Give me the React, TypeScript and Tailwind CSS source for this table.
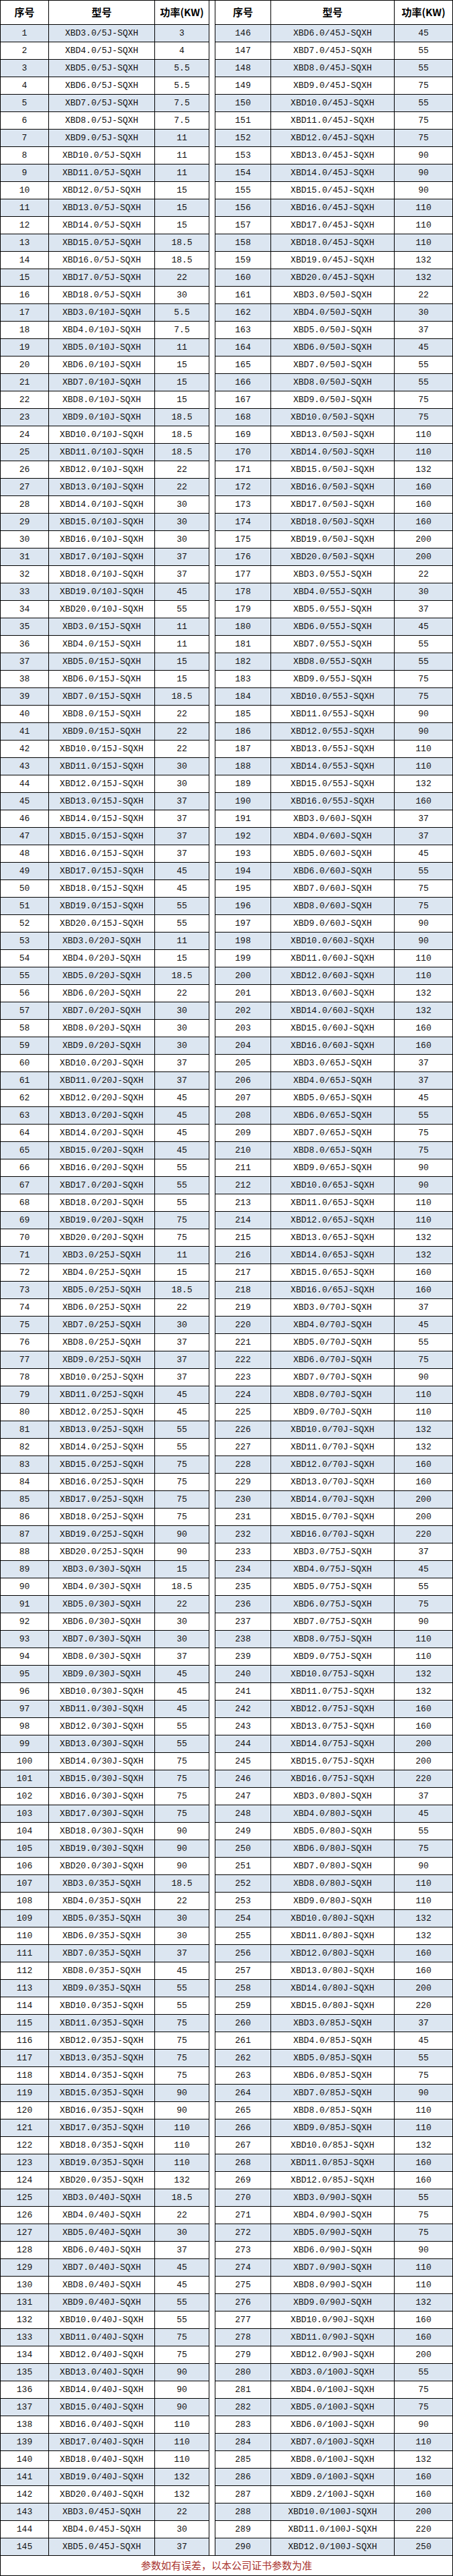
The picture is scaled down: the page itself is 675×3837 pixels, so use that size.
import React from 'react';

type Spec = [number, number[], number[]];

const range = (a: number, b: number) => Array.from({ length: b - a + 1 }, (_, i) => a + i);

// flow, heads, motor power
const SPECS: Spec[] = [
  [5, range(3, 18), [3, 4, 5.5, 5.5, 7.5, 7.5, 11, 11, 11, 15, 15, 15, 18.5, 18.5, 22, 30]],
  [10, range(3, 20), [5.5, 7.5, 11, 15, 15, 15, 18.5, 18.5, 18.5, 22, 22, 30, 30, 30, 37, 37, 45, 55]],
  [15, range(3, 20), [11, 11, 15, 15, 18.5, 22, 22, 22, 30, 30, 37, 37, 37, 37, 45, 45, 55, 55]],
  [20, range(3, 20), [11, 15, 18.5, 22, 30, 30, 30, 37, 37, 45, 45, 45, 45, 55, 55, 55, 75, 75]],
  [25, range(3, 20), [11, 15, 18.5, 22, 30, 37, 37, 37, 45, 45, 55, 55, 75, 75, 75, 75, 90, 90]],
  [30, range(3, 20), [15, 18.5, 22, 30, 30, 37, 45, 45, 45, 55, 55, 75, 75, 75, 75, 90, 90, 90]],
  [35, range(3, 20), [18.5, 22, 30, 30, 37, 45, 55, 55, 75, 75, 75, 75, 90, 90, 110, 110, 110, 132]],
  [40, range(3, 20), [18.5, 22, 30, 37, 45, 45, 55, 55, 75, 75, 90, 90, 90, 110, 110, 110, 132, 132]],
  [45, range(3, 20), [22, 30, 37, 45, 55, 55, 75, 55, 75, 75, 90, 90, 90, 110, 110, 110, 132, 132]],
  [50, [...range(3, 10), ...range(13, 20)], [22, 30, 37, 45, 55, 55, 75, 75, 110, 110, 132, 160, 160, 160, 200, 200]],
  [55, range(3, 16), [22, 30, 37, 45, 55, 55, 75, 75, 90, 90, 110, 110, 132, 160]],
  [60, range(3, 16), [37, 37, 45, 55, 75, 75, 90, 90, 110, 110, 132, 132, 160, 160]],
  [65, range(3, 16), [37, 37, 45, 55, 75, 75, 90, 90, 110, 110, 132, 132, 160, 160]],
  [70, range(3, 16), [37, 45, 55, 75, 90, 110, 110, 132, 132, 160, 160, 200, 200, 220]],
  [75, range(3, 16), [37, 45, 55, 75, 90, 110, 110, 132, 132, 160, 160, 200, 200, 220]],
  [80, range(3, 15), [37, 45, 55, 75, 90, 110, 110, 132, 132, 160, 160, 200, 220]],
  [85, range(3, 12), [37, 45, 55, 75, 90, 110, 110, 132, 160, 160]],
  [90, range(3, 12), [55, 75, 75, 90, 110, 110, 132, 160, 160, 200]],
  [100, [3, 4, 5, 6, 7, 8, 9, 9.2, 10, 11, 12], [55, 75, 75, 90, 110, 132, 160, 160, 200, 220, 250]],
];

type Row = { no: number; model: string; kw: string };

const ROWS: Row[] = SPECS.flatMap(([flow, heads, kws]) =>
  heads.map((h, i) => ({ no: 0, model: `XBD${h.toFixed(1)}/${flow}J-SQXH`, kw: String(kws[i]) }))
).map((r, i) => ({ ...r, no: i + 1 }));

const LEFT = ROWS.slice(0, 145);
const RIGHT = ROWS.slice(145);

function Half({ rows, cols, side }: { rows: Row[]; cols: string; side: 'left' | 'right' }) {
  const wrap = side === 'left' ? 'w-[311px] border-r' : 'w-[354px] border-l';
  return (
    <div className={`${wrap} border-black flex flex-col`}>
      {/* Header */}
      <div className={`grid ${cols} h-[35px] font-['Noto_Sans_CJK_SC',sans-serif] font-bold text-[15px] text-black`}>
        <div className="flex items-center justify-center border-r border-black">序号</div>
        <div className="flex items-center justify-center border-r border-black">型号</div>
        <div className="flex items-center justify-center">功率(KW)</div>
      </div>
      {rows.map((r, i) => (
        <div
          key={r.no}
          className={`grid ${cols} h-[26px] border-t border-black font-['Liberation_Mono','Noto_Sans_CJK_SC',monospace] text-[13px] text-[#111] ${
            i % 2 === 0 ? 'bg-[#dce6f1]' : 'bg-white'
          }`}
        >
          <div className="flex items-center justify-center border-r border-black">{r.no}</div>
          <div className="flex items-center justify-center border-r border-black whitespace-nowrap">{r.model}</div>
          <div className="flex items-center justify-center">{r.kw}</div>
        </div>
      ))}
    </div>
  );
}

export default function App() {
  return (
    <div className="w-[675px] bg-white border border-black">
      <div className="flex">
        <Half rows={LEFT} cols="grid-cols-[72px_158px_80px]" side="left" />
        <div className="w-[8px]" />
        <Half rows={RIGHT} cols="grid-cols-[83px_184px_86px]" side="right" />
      </div>

      {/* Footer note */}
      <div className="h-[30px] border-t border-black flex items-center justify-center font-['Noto_Sans_CJK_SC',sans-serif] text-[15px] text-[#a8322d]">
        参数如有误差，以本公司证书参数为准
      </div>
    </div>
  );
}
